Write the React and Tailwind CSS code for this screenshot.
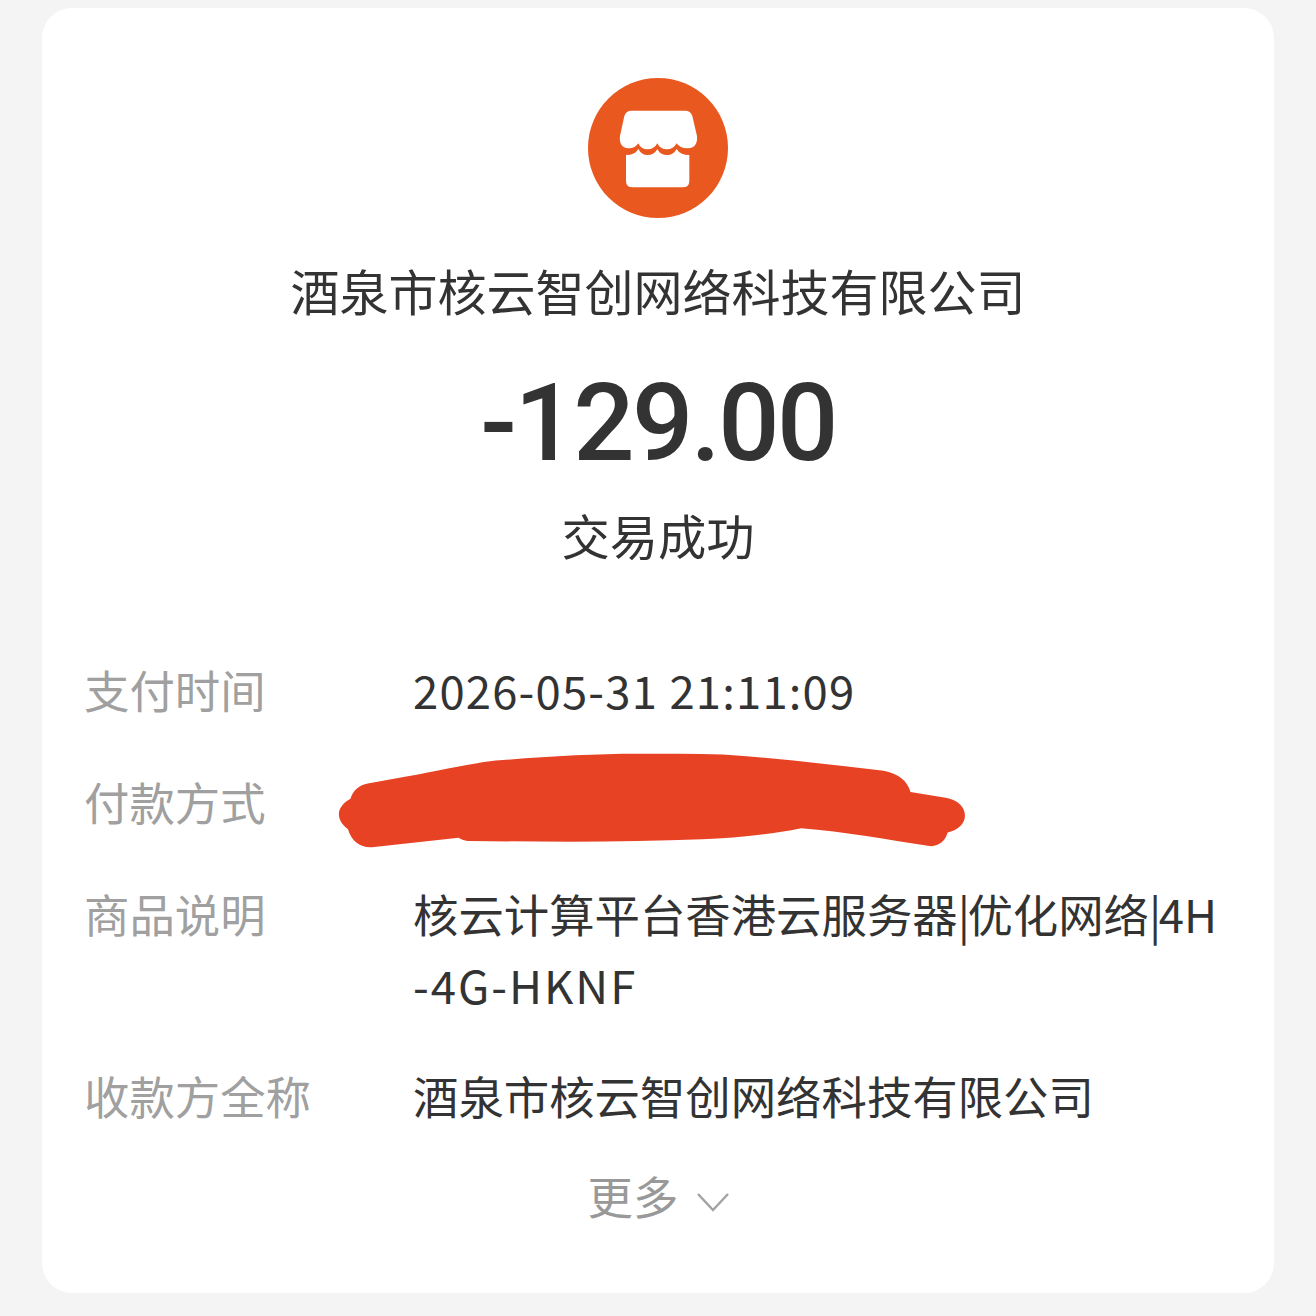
const CJK = { fontFamily: '"Noto Sans CJK SC", "Noto Sans", sans-serif' }

const rows = [
  { label: '支付时间', lines: ['2026-05-31 21:11:09'], tracking: 'tracking-[1.200px]' },
  { label: '付款方式', redacted: true },
  { label: '商品说明', lines: ['核云计算平台香港云服务器|优化网络|4H', '-4G-HKNF'] },
  { label: '收款方全称', lines: ['酒泉市核云智创网络科技有限公司'] },
]

function ShopIcon() {
  return (
    <div className="flex h-[140px] w-[140px] items-center justify-center rounded-full bg-[#e9581f]">
      <svg width="83.330" height="83.330" viewBox="168 138 250 250" fill="#fff">
        <path d="M215 152 H375 Q392 152 397 168 L411 228 Q414 262 385 265 Q360 266 350 250 Q340 268 321 268 Q300 268 292 250 Q283 268 262 268 Q243 268 235 250 Q225 266 205 265 Q176 262 180 228 L193 168 Q198 152 215 152 Z" />
        <path d="M198 285 Q225 285 235 267 Q245 285 262 285 Q283 285 292 267 Q300 285 322 285 Q340 285 350 267 Q360 285 388 285 V362 Q388 382 368 382 H218 Q198 382 198 362 Z" />
      </svg>
    </div>
  )
}

// scribble over the payment method, traced from the picture
function Redaction() {
  return (
    <svg
      className="absolute left-[-84px] top-[-25px]"
      width="650"
      height="120"
      viewBox="-4 4 1575 355"
      preserveAspectRatio="none"
      fill="#e84225"
    >
      <path d="M90 130 L180 110 C270 90 330 72 400 62 C520 50 640 42 740 42 C810 42 880 42 950 44 C1080 54 1210 74 1340 92 C1375 100 1398 122 1405 155 L1490 172 C1520 178 1537 200 1537 225 C1537 250 1518 268 1495 275 C1490 298 1475 315 1455 315 C1350 296 1245 272 1140 262 C1060 282 980 290 900 295 C720 304 530 302 340 300 C328 300 318 296 310 290 L100 318 C72 320 50 300 42 265 C28 252 20 238 20 220 C20 202 32 186 48 175 C54 150 70 134 90 130 Z" />
    </svg>
  )
}

// the pipes sit tighter in the picture than the font's own advance
function ValueLine({ text, className }) {
  const parts = text.split('|')
  return (
    <div className={className}>
      {parts.map((part, i) => (
        <span key={i}>
          {i > 0 && <span className="tracking-[-2.500px]">|</span>}
          {part}
        </span>
      ))}
    </div>
  )
}

export default function App() {
  return (
    <div className="min-h-[1316px] bg-[#f4f4f4] pt-2" style={CJK}>
      <div className="mx-[42px] h-[1285px] rounded-[30px] bg-white pt-[70px]">
        <div className="flex flex-col items-center">
          <ShopIcon />
          <h1 className="mt-[41px] text-[49px] leading-[62px] font-normal whitespace-nowrap text-[#333]">
            酒泉市核云智创网络科技有限公司
          </h1>
          <div
            className="mt-[37px] text-[108px] leading-[130px] font-medium tracking-[-2.600px] text-[#333]"
            style={{ fontFamily: 'Roboto, sans-serif' }}
          >
            -129.00
          </div>
          <div className="mt-[14px] text-[48.300px] leading-[64px] text-[#333]">交易成功</div>
        </div>

        <div className="mt-[88px] flex flex-col pl-[42px] pr-[50px]">
          {rows.map((row) => (
            <div
              key={row.label}
              className={`flex text-[45.400px] leading-[71px] ${row.lines?.length > 1 ? 'pb-[40px]' : 'pb-[41px]'}`}
            >
              <div className="w-[329px] shrink-0 text-[#a0a0a0]">{row.label}</div>
              <div className="relative min-h-[71px] flex-1 whitespace-nowrap text-[#333]">
                {row.redacted ? (
                  <Redaction />
                ) : (
                  row.lines.map((line, i) => (
                    <ValueLine
                      key={line}
                      text={line}
                      className={row.tracking ?? (i > 0 ? 'tracking-[2px]' : '')}
                    />
                  ))
                )}
              </div>
            </div>
          ))}
        </div>

        <div className="mt-[-8px] flex items-center justify-center gap-[18px] pl-[2px] text-[#999]">
          <span className="text-[45.400px] leading-[62px]">更多</span>
          <svg className="mt-[14px]" width="34" height="20" viewBox="0 0 34 20" fill="none" stroke="#a3a3a3" strokeWidth="2.500">
            <path d="M2 2 L17 18 L32 2" />
          </svg>
        </div>
      </div>
    </div>
  )
}
